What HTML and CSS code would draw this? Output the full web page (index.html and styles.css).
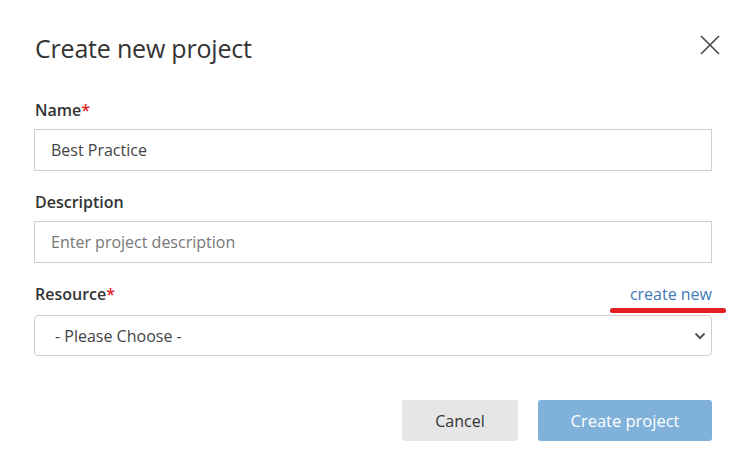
FILE: index.html
```html
<!DOCTYPE html>
<html lang="en">
<head>
<meta charset="utf-8">
<title>Create new project</title>
<link rel="stylesheet" href="styles.css">
</head>
<body>
<div class="modal">
  <div class="modal-header">
    <h1 class="modal-title">Create new project</h1>
    <button class="close-btn" aria-label="Close">
      <svg width="22" height="22" viewBox="0 0 22 22"><path d="M2 2 L20 20 M20 2 L2 20" stroke="#444" stroke-width="1.6" fill="none"/></svg>
    </button>
  </div>
  <form class="form">
    <div class="field">
      <label class="label">Name<span class="req">*</span></label>
      <input class="input" type="text" value="Best Practice">
    </div>
    <div class="field">
      <label class="label">Description</label>
      <input class="input" type="text" placeholder="Enter project description">
    </div>
    <div class="field">
      <div class="label-row">
        <label class="label">Resource<span class="req">*</span></label>
        <a class="link" href="#">create new</a>
        <span class="annotation"></span>
      </div>
      <div class="select-wrap">
        <select class="select"><option>- Please Choose -</option></select>
        <svg class="chevron" width="12" height="8" viewBox="0 0 12 8"><path d="M1.5 1.5 L6 6 L10.5 1.5" stroke="#555" stroke-width="2" fill="none"/></svg>
      </div>
    </div>
    <div class="actions">
      <button type="button" class="btn btn-cancel">Cancel</button>
      <button type="button" class="btn btn-primary">Create project</button>
    </div>
  </form>
</div>
</body>
</html>
```
FILE: styles.css
```css
* { box-sizing: border-box; }
html, body {
  margin: 0;
  background: #fff;
}
body {
  font-family: "Open Sans", "Noto Sans", sans-serif;
  color: #333;
}
.modal {
  width: 745px;
  padding: 0 33px 0 34px;
}
.modal-header {
  display: flex;
  justify-content: space-between;
  align-items: flex-start;
  padding-top: 30px;
}
.modal-title {
  margin: 0 0 0 1px;
  font-size: 25px;
  font-weight: 400;
  line-height: 36px;
  color: #333;
  letter-spacing: -0.2px;
}
.close-btn {
  margin: 4px -9px 0 0;
  padding: 0;
  border: 0;
  background: none;
  width: 22px;
  height: 22px;
  display: flex;
}
.form {
  display: flex;
  flex-direction: column;
  margin-top: 33px;
}
.field {
  display: flex;
  flex-direction: column;
  margin-bottom: 20px;
}
.label {
  font-size: 16px;
  font-weight: 600;
  line-height: 22px;
  color: #333;
  margin: 0 0 8px 1px;
}
.req { color: #e02424; }
.label-row {
  position: relative;
  display: flex;
  justify-content: space-between;
  align-items: flex-start;
  margin-bottom: 2px;
}
.link {
  font-size: 16px;
  line-height: 22px;
  color: #3f7ab9;
  text-decoration: none;
}
.annotation {
  position: absolute;
  right: -14px;
  top: 25px;
  width: 116px;
  height: 5px;
  border-radius: 3px;
  background: #e41e1e;
}
.input {
  height: 42px;
  border: 1px solid #cfcfcf;
  border-radius: 0;
  padding: 0 16px;
  font-family: inherit;
  font-size: 16px;
  color: #444;
  outline: none;
}
.input::placeholder { color: #777; }
.select-wrap {
  position: relative;
  display: flex;
}
.select {
  flex: 1;
  height: 41px;
  appearance: none;
  -webkit-appearance: none;
  border: 1px solid #cfcfcf;
  border-radius: 4px;
  background: #fff;
  padding: 0 20px;
  font-family: inherit;
  font-size: 16px;
  color: #444;
}
.chevron {
  position: absolute;
  right: 6px;
  top: 17px;
}
.actions {
  display: flex;
  justify-content: flex-end;
  gap: 20px;
  margin-top: 24px;
}
.btn {
  height: 41px;
  border: 0;
  border-radius: 3px;
  font-family: inherit;
  font-size: 16px;
}
.btn-cancel {
  width: 116px;
  background: #e6e6e6;
  color: #333;
}
.btn-primary {
  width: 174px;
  background: #7fb1da;
  color: #fff;
  font-size: 16.5px;
}
```
